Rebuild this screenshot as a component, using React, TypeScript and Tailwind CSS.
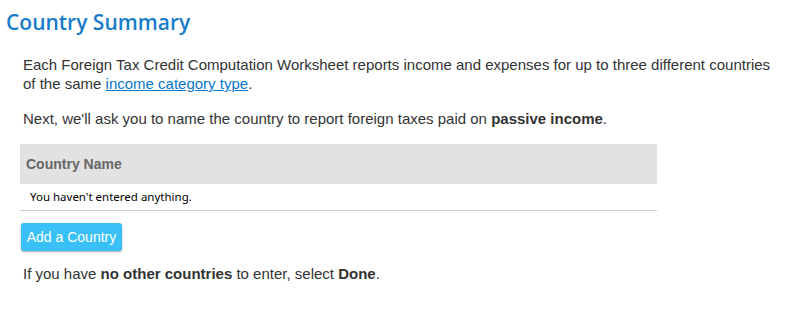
import React from 'react';

const App: React.FC = () => {
  return (
    <div className="min-h-screen bg-white font-['Liberation_Sans',Arial,sans-serif] text-[#333]">
      <h1 className="pl-[6px] pt-[7px] text-[21px] leading-[30px] font-semibold text-[#1a7cc8] font-['Open_Sans',sans-serif]">
        Country Summary
      </h1>

      <div className="pl-[23px] pt-[18px]">
        <p className="w-[760px] text-[15px] leading-[19px]">
          Each Foreign Tax Credit Computation Worksheet reports income and expenses for up to three different countries
          of the same{' '}
          <a href="#" className="text-[#0a77c7] underline">
            income category type
          </a>
          .
        </p>
        <p className="mt-[16px] text-[15px] leading-[19px]">
          Next, we'll ask you to name the country to report foreign taxes paid on <b>passive income</b>.
        </p>
      </div>

      <div className="ml-[20px] mt-[16px] w-[637px]">
        <div className="flex h-[40px] items-center bg-[#e2e2e2] pl-[6px]">
          <span className="text-[14px] font-bold text-[#666]">Country Name</span>
        </div>
        <div className="flex h-[27px] items-center border-b border-[#cbcbcb] pl-[10px]">
          <span className="text-[11.5px] text-black font-['Noto_Sans',sans-serif]">You haven't entered anything.</span>
        </div>
      </div>

      <div className="ml-[21px] mt-[12px]">
        <button className="h-[28px] w-[101px] rounded-[3px] bg-[#38c0f7] text-[14px] text-white shadow-[0_1px_2px_rgba(0,0,0,0.35)]">
          Add a Country
        </button>
      </div>

      <p className="pl-[23px] pt-[13px] text-[15px] leading-[19px]">
        If you have <b>no other countries</b> to enter, select <b>Done</b>.
      </p>
    </div>
  );
};

export default App;
